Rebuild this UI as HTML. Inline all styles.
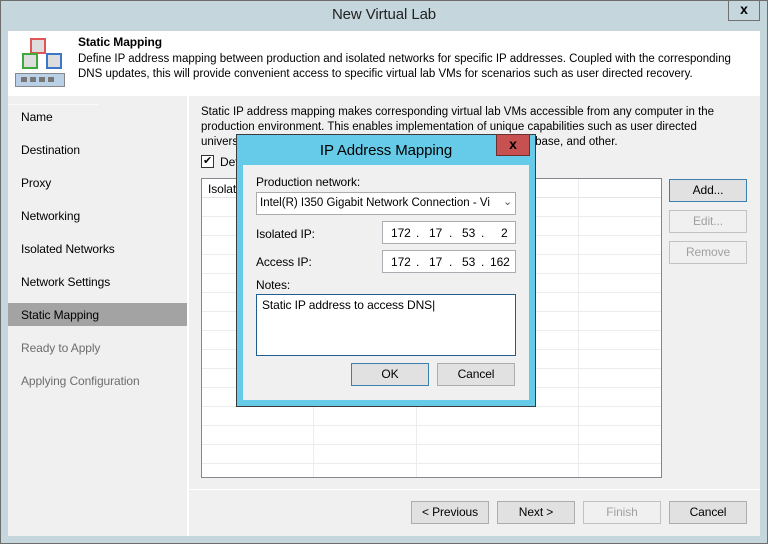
<!DOCTYPE html>
<html><head><style>
*{box-sizing:border-box;margin:0;padding:0}
body{width:768px;height:544px;position:relative;font-family:"Liberation Sans",sans-serif;font-size:12px;color:#000;background:#c5d7dd;overflow:hidden;letter-spacing:-0.1px}
.a{position:absolute;white-space:nowrap}
.win{left:0;top:0;width:768px;height:544px;border:1px solid #6d6d6d;background:#c5d7dd}
.btn{position:absolute;border:1px solid #adadad;background:#e1e1e1;text-align:center;line-height:20px;font-size:12px}
.dis{color:#a0a0a0;background:#f0f0f0;border-color:#c2c2c2}
.nav{position:absolute;left:21px;font-size:12px}
.inp{position:absolute;background:#fff;border:1px solid #abadb3}
.t{font-size:11.5px;letter-spacing:0}
</style></head><body>
<div class="a win"></div>
<div class="a" style="left:0;top:6px;width:768px;text-align:center;font-size:15px;color:#222">New Virtual Lab</div>
<div class="a" style="left:728px;top:0;width:32px;height:21px;border:1px solid #707070;border-top:none;text-align:center;font-weight:bold;font-size:14px;line-height:19px">x</div>
<div class="a" style="left:8px;top:31px;width:752px;height:65px;background:#fff"></div>
<svg class="a" style="left:14px;top:36px" width="52" height="54">
<rect x="17" y="3" width="14" height="14" fill="#ddd" stroke="#e05555" stroke-width="2"/>
<rect x="9" y="18" width="14" height="14" fill="#ddd" stroke="#3cab3c" stroke-width="2"/>
<rect x="33" y="18" width="14" height="14" fill="#ddd" stroke="#3b78c8" stroke-width="2"/>
<rect x="1.5" y="37.5" width="49" height="13" fill="#b9d0e6" stroke="#888"/>
<g fill="#777"><rect x="7" y="41" width="6" height="5"/><rect x="16" y="41" width="6" height="5"/><rect x="25" y="41" width="6" height="5"/><rect x="34" y="41" width="6" height="5"/></g>
</svg>
<div class="a" style="left:78px;top:35px;font-weight:bold">Static Mapping</div>
<div class="a t" style="left:78px;top:53px">Define IP address mapping between production and isolated networks for specific IP addresses. Coupled with the corresponding</div>
<div class="a t" style="left:78px;top:68px">DNS updates, this will provide convenient access to specific virtual lab VMs for scenarios such as user directed recovery.</div>
<div class="a" style="left:8px;top:96px;width:752px;height:440px;background:#f0f0f0"></div>
<div class="a" style="left:8px;top:104px;width:90px;height:1px;background:#fafafa"></div>
<div class="a" style="left:187px;top:96px;width:2px;height:440px;background:#fff"></div>
<div class="nav" style="top:110px">Name</div>
<div class="nav" style="top:143px">Destination</div>
<div class="nav" style="top:176px">Proxy</div>
<div class="nav" style="top:209px">Networking</div>
<div class="nav" style="top:242px">Isolated Networks</div>
<div class="nav" style="top:275px">Network Settings</div>
<div class="a" style="left:8px;top:303px;width:179px;height:23px;background:#a3a3a3"></div>
<div class="nav" style="top:308px">Static Mapping</div>
<div class="nav" style="top:341px;color:#6d6d6d">Ready to Apply</div>
<div class="nav" style="top:374px;color:#6d6d6d">Applying Configuration</div>
<div class="a t" style="left:201px;top:106px">Static IP address mapping makes corresponding virtual lab VMs accessible from any computer in the</div>
<div class="a t" style="left:201px;top:121px">production environment. This enables implementation of unique capabilities such as user directed</div>
<div class="a t" style="left:201px;top:136px">universal restores, IP address mapping to a previous copy of database, and other.</div>
<div class="a" style="left:201px;top:155px;width:13px;height:13px;border:1px solid #333;background:#fff;font-size:11px;line-height:11px;text-align:center">✔</div>
<div class="a" style="left:220px;top:155px">Default</div>
<div class="a" style="left:201px;top:178px;width:461px;height:300px;background:#fff;border:1px solid #828790;
background-image:repeating-linear-gradient(#fff 0 18px,#ececec 18px 19px);background-position:0 19px"></div>
<div class="a" style="left:202px;top:179px;width:459px;height:19px;background:#fff;border-bottom:1px solid #e5e5e5"></div>
<div class="a" style="left:208px;top:182px">Isolated IP</div>
<div class="a" style="left:313px;top:179px;width:1px;height:298px;background:#ececec"></div>
<div class="a" style="left:416px;top:179px;width:1px;height:298px;background:#ececec"></div>
<div class="a" style="left:578px;top:179px;width:1px;height:298px;background:#ececec"></div>
<div class="btn" style="left:669px;top:179px;width:78px;height:23px;border-color:#3c7fb1;background:#e1e1e1">Add...</div>
<div class="btn dis" style="left:669px;top:210px;width:78px;height:23px">Edit...</div>
<div class="btn dis" style="left:669px;top:241px;width:78px;height:23px">Remove</div>
<div class="a" style="left:189px;top:489px;width:571px;height:1px;background:#fff"></div>
<div class="btn" style="left:411px;top:501px;width:78px;height:23px">&lt; Previous</div>
<div class="btn" style="left:497px;top:501px;width:78px;height:23px">Next &gt;</div>
<div class="btn dis" style="left:583px;top:501px;width:78px;height:23px">Finish</div>
<div class="btn" style="left:669px;top:501px;width:78px;height:23px">Cancel</div>
<div class="a" style="left:236px;top:134px;width:300px;height:273px;background:#65cbe8;border:1px solid #3b3b3b"></div>
<div class="a" style="left:236px;top:142px;width:300px;text-align:center;font-size:15px">IP Address Mapping</div>
<div class="a" style="left:496px;top:134px;width:34px;height:22px;background:#c75050;border:1px solid #6b2f2f;color:#000;font-weight:bold;text-align:center;line-height:19px;font-size:14px">x</div>
<div class="a" style="left:243px;top:165px;width:286px;height:235px;background:#f0f0f0"></div>
<div class="a" style="left:256px;top:175px">Production network:</div>
<div class="inp" style="left:256px;top:192px;width:260px;height:23px;border-color:#acacac"></div>
<div class="a t" style="left:260px;top:197px">Intel(R) I350 Gigabit Network Connection - Vi</div>
<div class="a" style="left:503px;top:195px;font-size:11px;color:#555">&#8964;</div>
<div class="a" style="left:256px;top:227px">Isolated IP:</div>
<div class="inp" style="left:382px;top:221px;width:134px;height:23px"></div>
<div class="a" style="left:391px;top:226px">172</div><div class="a" style="left:416px;top:226px">.</div>
<div class="a" style="left:429px;top:226px">17</div><div class="a" style="left:449px;top:226px">.</div>
<div class="a" style="left:462px;top:226px">53</div><div class="a" style="left:481px;top:226px">.</div>
<div class="a" style="left:501px;top:226px">2</div>
<div class="a" style="left:256px;top:255px">Access IP:</div>
<div class="inp" style="left:382px;top:250px;width:134px;height:23px"></div>
<div class="a" style="left:391px;top:255px">172</div><div class="a" style="left:416px;top:255px">.</div>
<div class="a" style="left:429px;top:255px">17</div><div class="a" style="left:449px;top:255px">.</div>
<div class="a" style="left:462px;top:255px">53</div><div class="a" style="left:481px;top:255px">.</div>
<div class="a" style="left:490px;top:255px">162</div>
<div class="a" style="left:256px;top:278px">Notes:</div>
<div class="inp" style="left:256px;top:294px;width:260px;height:62px;border-color:#1d5f8f"></div>
<div class="a" style="left:262px;top:298px">Static IP address to access DNS|</div>
<div class="btn" style="left:351px;top:363px;width:78px;height:23px;border-color:#3c7fb1">OK</div>
<div class="btn" style="left:437px;top:363px;width:78px;height:23px">Cancel</div>
</body></html>
